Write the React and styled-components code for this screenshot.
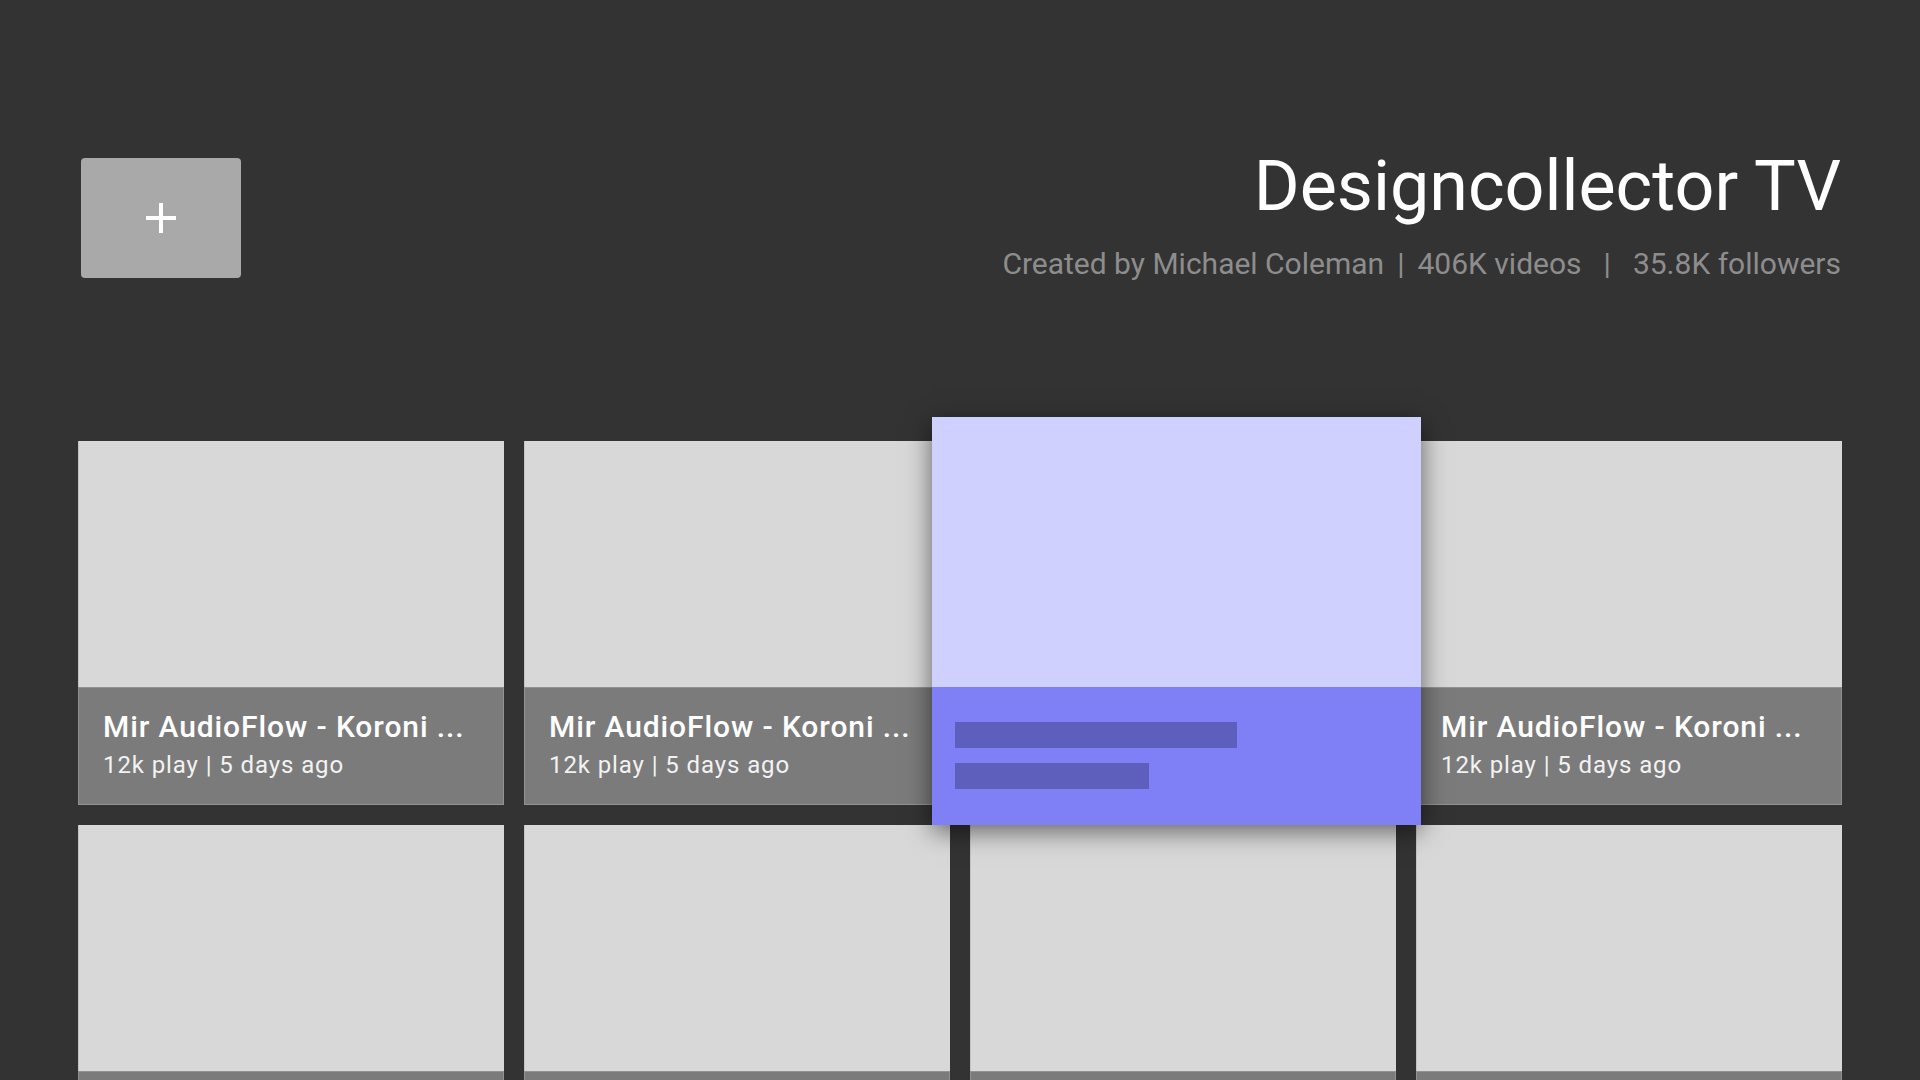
import React from "react";
import styled, { createGlobalStyle } from "styled-components";

const GlobalStyle = createGlobalStyle`
  html, body {
    margin: 0;
    padding: 0;
    background: #333333;
    overflow: hidden;
  }
  body {
    font-family: Roboto, "Noto Sans", sans-serif;
    -webkit-font-smoothing: antialiased;
  }
`;

const videos = Array.from({ length: 8 }, (_, i) => ({
  id: i,
  title: "Mir AudioFlow - Koroni ...",
  meta: "12k play | 5 days ago",
  focused: i === 2,
}));

const App = () => {
  return (
    <>
      <GlobalStyle />
      <Page>
        <Header>
          <AddButton aria-label="Add">
            <svg width="30" height="30" viewBox="0 0 30 30">
              <rect x="13" y="0" width="4" height="30" fill="#fff" />
              <rect x="0" y="13" width="30" height="4" fill="#fff" />
            </svg>
          </AddButton>
          <ChannelInfo>
            <ChannelTitle>Designcollector TV</ChannelTitle>
            <ChannelMeta>
              Created by Michael Coleman<Sep $gap={13}>|</Sep>406K videos
              <Sep $gap={22}>|</Sep>35.8K followers
            </ChannelMeta>
          </ChannelInfo>
        </Header>
        <Grid>
          {videos.map((v) => (
            <Cell key={v.id}>
              <Card>
                <Thumb />
                <Caption>
                  <VideoTitle>{v.title}</VideoTitle>
                  <VideoMeta>{v.meta}</VideoMeta>
                </Caption>
              </Card>
              {v.focused && (
                <FocusCard>
                  <FocusThumb />
                  <FocusCaption>
                    <Bar $w={282} />
                    <Bar $w={194} />
                  </FocusCaption>
                </FocusCard>
              )}
            </Cell>
          ))}
        </Grid>
      </Page>
    </>
  );
};

const Page = styled.div`
  width: 1920px;
  height: 1080px;
  box-sizing: border-box;
  padding: 0 78px;
  overflow: hidden;
`;

const Header = styled.div`
  display: flex;
  justify-content: space-between;
  align-items: flex-start;
  padding-top: 151px;
`;

const AddButton = styled.div`
  width: 160px;
  height: 120px;
  margin: 7px 0 0 3px;
  background: #a9a9a9;
  border-radius: 4px;
  display: flex;
  align-items: center;
  justify-content: center;
`;

const ChannelInfo = styled.div`
  display: flex;
  flex-direction: column;
  align-items: flex-end;
  gap: 28px;
  margin-right: 1px;
`;

const ChannelTitle = styled.h1`
  margin: 0;
  font-size: 70px;
  line-height: 70px;
  font-weight: 400;
  color: #ffffff;
`;

const ChannelMeta = styled.div`
  font-size: 30px;
  line-height: 30px;
  color: #8d8d8d;
`;

const Sep = styled.span`
  margin: 0 ${(p) => p.$gap}px;
`;

const Grid = styled.div`
  display: grid;
  grid-template-columns: repeat(4, 426px);
  grid-auto-rows: 364px;
  gap: 20px;
  margin-top: 162px;
`;

const Cell = styled.div`
  position: relative;
`;

const Card = styled.div`
  display: flex;
  flex-direction: column;
  height: 100%;
`;

const Thumb = styled.div`
  height: 246px;
  background: #d8d8d8;
  box-shadow: inset 1px 0 0 #c4c4c4;
`;

const Caption = styled.div`
  flex: 1;
  background: #7b7b7b;
  border: 1px solid #929292;
  padding: 24px 0 0 24px;
  display: flex;
  flex-direction: column;
  gap: 11px;
`;

const VideoTitle = styled.div`
  font-size: 30px;
  line-height: 30px;
  font-weight: 500;
  letter-spacing: 0.9px;
  color: #ffffff;
  white-space: nowrap;
`;

const VideoMeta = styled.div`
  font-size: 24px;
  line-height: 24px;
  letter-spacing: 0.9px;
  color: #f2f2f2;
`;

const FocusCard = styled.div`
  position: absolute;
  left: -38px;
  top: -24px;
  width: 489px;
  height: 408px;
  display: flex;
  flex-direction: column;
  box-shadow: 0 6px 24px rgba(0, 0, 0, 0.55);
  z-index: 2;
`;

const FocusThumb = styled.div`
  height: 270px;
  background: #cfd0fe;
`;

const FocusCaption = styled.div`
  flex: 1;
  background: #8080f6;
  padding: 35px 0 0 23px;
  display: flex;
  flex-direction: column;
  gap: 15px;
`;

const Bar = styled.div`
  width: ${(p) => p.$w}px;
  height: 26px;
  background: #5e5fbd;
`;

export default App;
